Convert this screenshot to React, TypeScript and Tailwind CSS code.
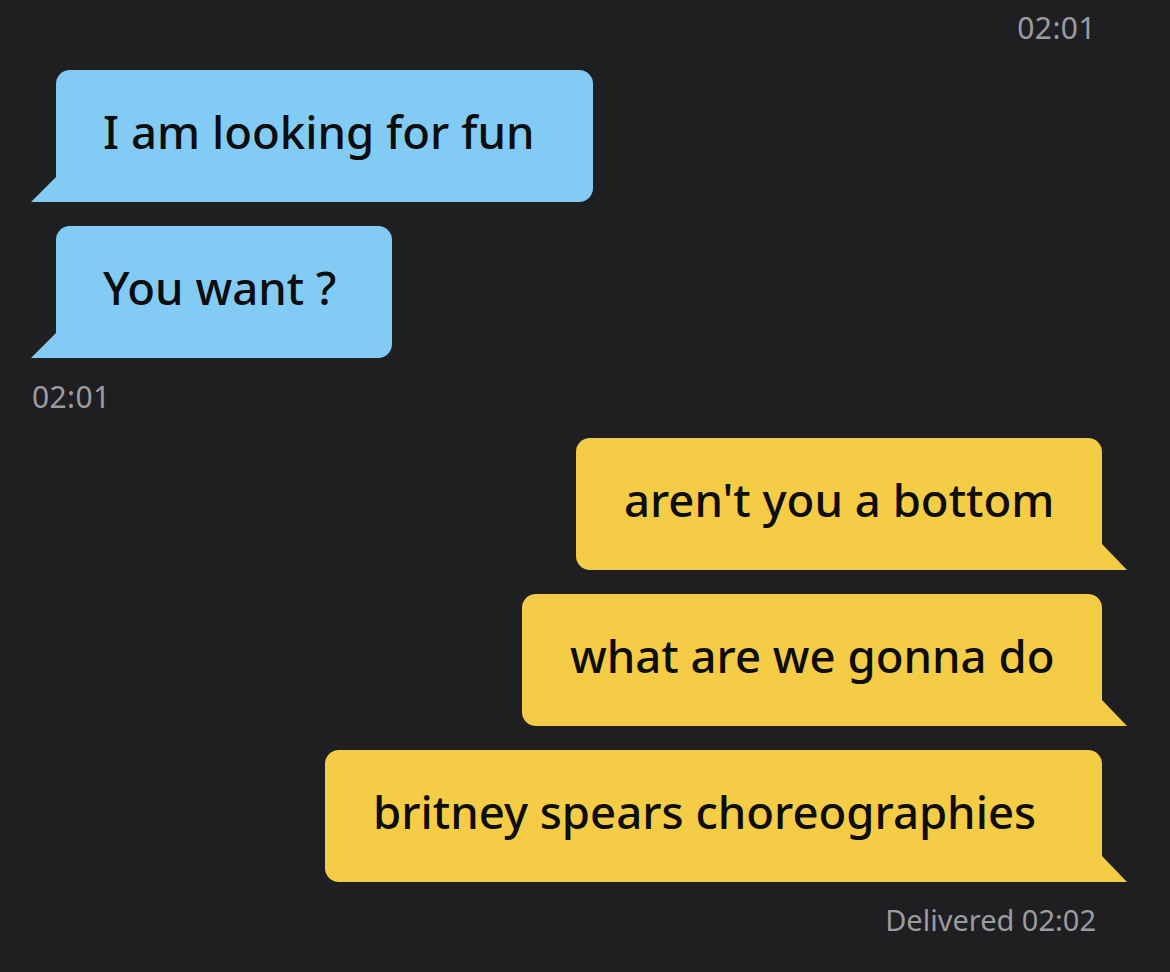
import React from "react";

type Msg = { text: string; width: number };

const incoming: Msg[] = [
  { text: "I am looking for fun", width: 537 },
  { text: "You want ?", width: 336 },
];

const outgoing: Msg[] = [
  { text: "aren't you a bottom", width: 526 },
  { text: "what are we gonna do", width: 580 },
  { text: "britney spears choreographies", width: 777 },
];

const font = { fontFamily: '"Noto Sans", "Open Sans", sans-serif' };

const Incoming = ({ text, width }: Msg) => (
  <div
    className="relative flex h-[132px] items-center rounded-[14px] rounded-bl-none bg-[#82cbf5] pl-[47px] pb-[8px]"
    style={{ width }}
  >
    <svg className="absolute bottom-0 left-[-25px]" width="25" height="25" viewBox="0 0 25 25">
      <polygon points="25,0 25,25 0,25" fill="#82cbf5" />
    </svg>
    <span className="text-[45.5px] font-medium leading-none text-[#0d0d0f] whitespace-nowrap">{text}</span>
  </div>
);

const Outgoing = ({ text, width }: Msg) => (
  <div
    className="relative flex h-[132px] items-center rounded-[14px] rounded-br-none bg-[#f5cc45] pl-[48px] pb-[8px]"
    style={{ width }}
  >
    <svg className="absolute bottom-0 right-[-25px]" width="25" height="26" viewBox="0 0 25 26">
      <polygon points="0,0 25,26 0,26" fill="#f5cc45" />
    </svg>
    <span className="text-[45.5px] font-medium leading-none text-[#0d0d0f] whitespace-nowrap">{text}</span>
  </div>
);

export default function App() {
  return (
    <div className="h-[972px] w-[1170px] overflow-hidden bg-[#1f1f21]" style={font}>
      <div className="flex flex-col pt-[13px]">
        <div className="pr-[74px] text-right text-[30px] leading-none tracking-[0.4px] text-[#9b9ba0]">02:01</div>

        <div className="mt-[27px] flex flex-col gap-[24px] pl-[56px]">
          {incoming.map((m) => (
            <Incoming key={m.text} {...m} />
          ))}
        </div>

        <div className="mt-[24px] pl-[32px] text-[30px] leading-none tracking-[0.4px] text-[#9b9ba0]">02:01</div>

        <div className="mt-[26px] flex flex-col items-end gap-[24px] pr-[68px]">
          {outgoing.map((m) => (
            <Outgoing key={m.text} {...m} />
          ))}
        </div>

        <div className="mt-[23px] pr-[74px] text-right text-[29px] leading-none text-[#9b9ba0]">Delivered 02:02</div>
      </div>
    </div>
  );
}
